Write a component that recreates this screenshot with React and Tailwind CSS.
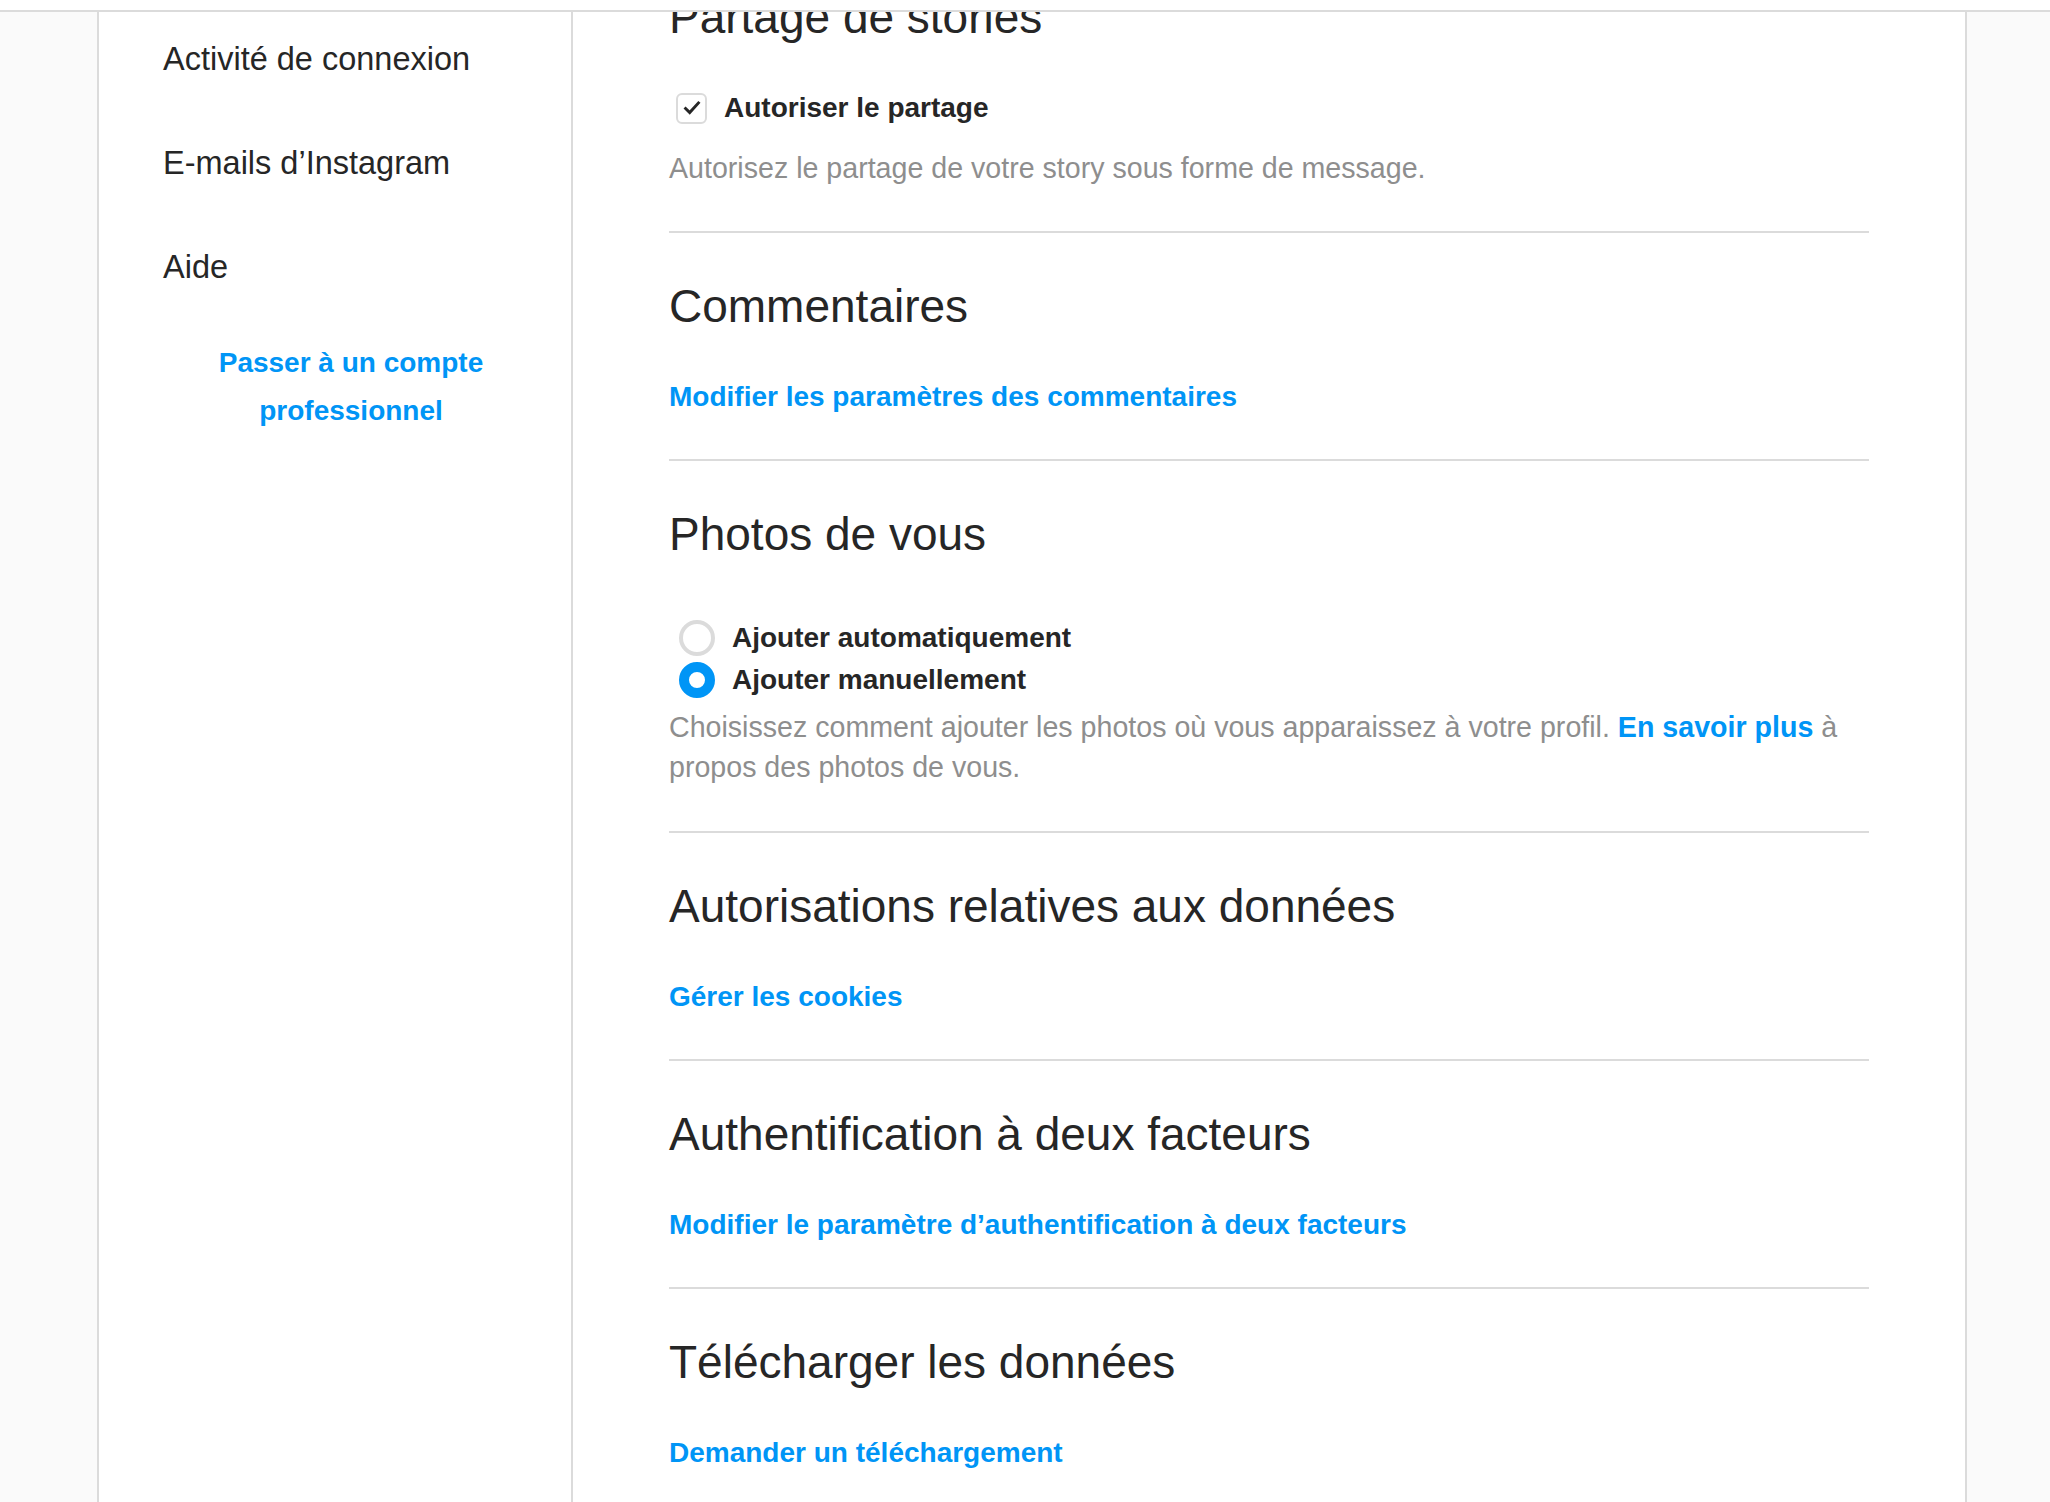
import React from 'react'

const FONT = { fontFamily: '"Liberation Sans", Arial, Helvetica, sans-serif' }

const SIDE_ITEMS = ['Activité de connexion', 'E-mails d’Instagram', 'Aide']

function Section({ title, children, last }) {
  return (
    <section className={`pt-[45px] pb-[44px] ${last ? '' : 'border-b-2 border-[#dbdbdb]'}`}>
      <h2 className="text-[46px] leading-[56px] font-normal text-[#262626]">{title}</h2>
      {children}
    </section>
  )
}

function LinkRow({ children }) {
  return (
    <div className="mt-[45px] text-[28px] leading-[36px] font-bold text-[#0095f6]">{children}</div>
  )
}

export default function App() {
  return (
    <div className="h-[1502px] overflow-hidden bg-[#fafafa]" style={FONT}>
      {/* top nav edge */}
      <div className="fixed top-0 inset-x-0 h-[12px] bg-white border-b-2 border-[#dbdbdb] z-10" />

      <div className="ml-[97px] w-[1870px] h-full flex bg-white border-x-2 border-[#dbdbdb]">
        {/* Sidebar */}
        <aside className="w-[474px] shrink-0 border-r-2 border-[#dbdbdb] pt-[7px]">
          {SIDE_ITEMS.map(label => (
            <div key={label} className="h-[104px] flex items-center pl-[64px] text-[32.5px] text-[#262626]">
              {label}
            </div>
          ))}
          <div className="mt-[20px] pl-[32px] text-center text-[28px] leading-[48px] font-bold text-[#0095f6]">
            Passer à un compte<br />professionnel
          </div>
        </aside>

        {/* Main */}
        <main className="flex-1 px-[96px]">
          <section className="pb-[43px] border-b-2 border-[#dbdbdb]">
            <h2 className="-mt-[11px] text-[46px] leading-[56px] font-normal text-[#262626]">Partage de stories</h2>
            <label className="mt-[45px] h-[36px] flex items-center gap-[17px]">
              <span className="ml-[7px] w-[31px] h-[31px] rounded-[6px] border-2 border-[#dbdbdb] flex items-center justify-center">
                <svg viewBox="0 0 24 24" className="w-[22px] h-[22px]" fill="none" stroke="#262626" strokeWidth="3.2" strokeLinecap="square">
                  <path d="M5 12.5l4.5 4.5L19 6.5" />
                </svg>
              </span>
              <span className="text-[28px] font-bold text-[#262626]">Autoriser le partage</span>
            </label>
            <p className="mt-[22px] text-[28.6px] leading-[40px] text-[#8e8e8e]">
              Autorisez le partage de votre story sous forme de message.
            </p>
          </section>

          <Section title="Commentaires">
            <LinkRow>Modifier les paramètres des commentaires</LinkRow>
          </Section>

          <Section title="Photos de vous">
            <div className="mt-[55px]">
              <div className="h-[42px] flex items-center gap-[17px]">
                <span className="ml-[10px] w-[36px] h-[36px] rounded-full border-4 border-[#dbdbdb]" />
                <span className="text-[28px] font-bold text-[#262626]">Ajouter automatiquement</span>
              </div>
              <div className="h-[42px] flex items-center gap-[17px]">
                <span className="ml-[10px] w-[36px] h-[36px] rounded-full border-[10px] border-[#0095f6] bg-white" />
                <span className="text-[28px] font-bold text-[#262626]">Ajouter manuellement</span>
              </div>
            </div>
            <p className="mt-[6px] text-[28.6px] leading-[40px] text-[#8e8e8e]">
              Choisissez comment ajouter les photos où vous apparaissez à votre profil.{' '}
              <span className="font-bold text-[#0095f6]">En savoir plus</span> à propos des photos de vous.
            </p>
          </Section>

          <Section title="Autorisations relatives aux données">
            <LinkRow>Gérer les cookies</LinkRow>
          </Section>

          <Section title="Authentification à deux facteurs">
            <LinkRow>Modifier le paramètre d’authentification à deux facteurs</LinkRow>
          </Section>

          <Section title="Télécharger les données" last>
            <LinkRow>Demander un téléchargement</LinkRow>
          </Section>
        </main>
      </div>
    </div>
  )
}
